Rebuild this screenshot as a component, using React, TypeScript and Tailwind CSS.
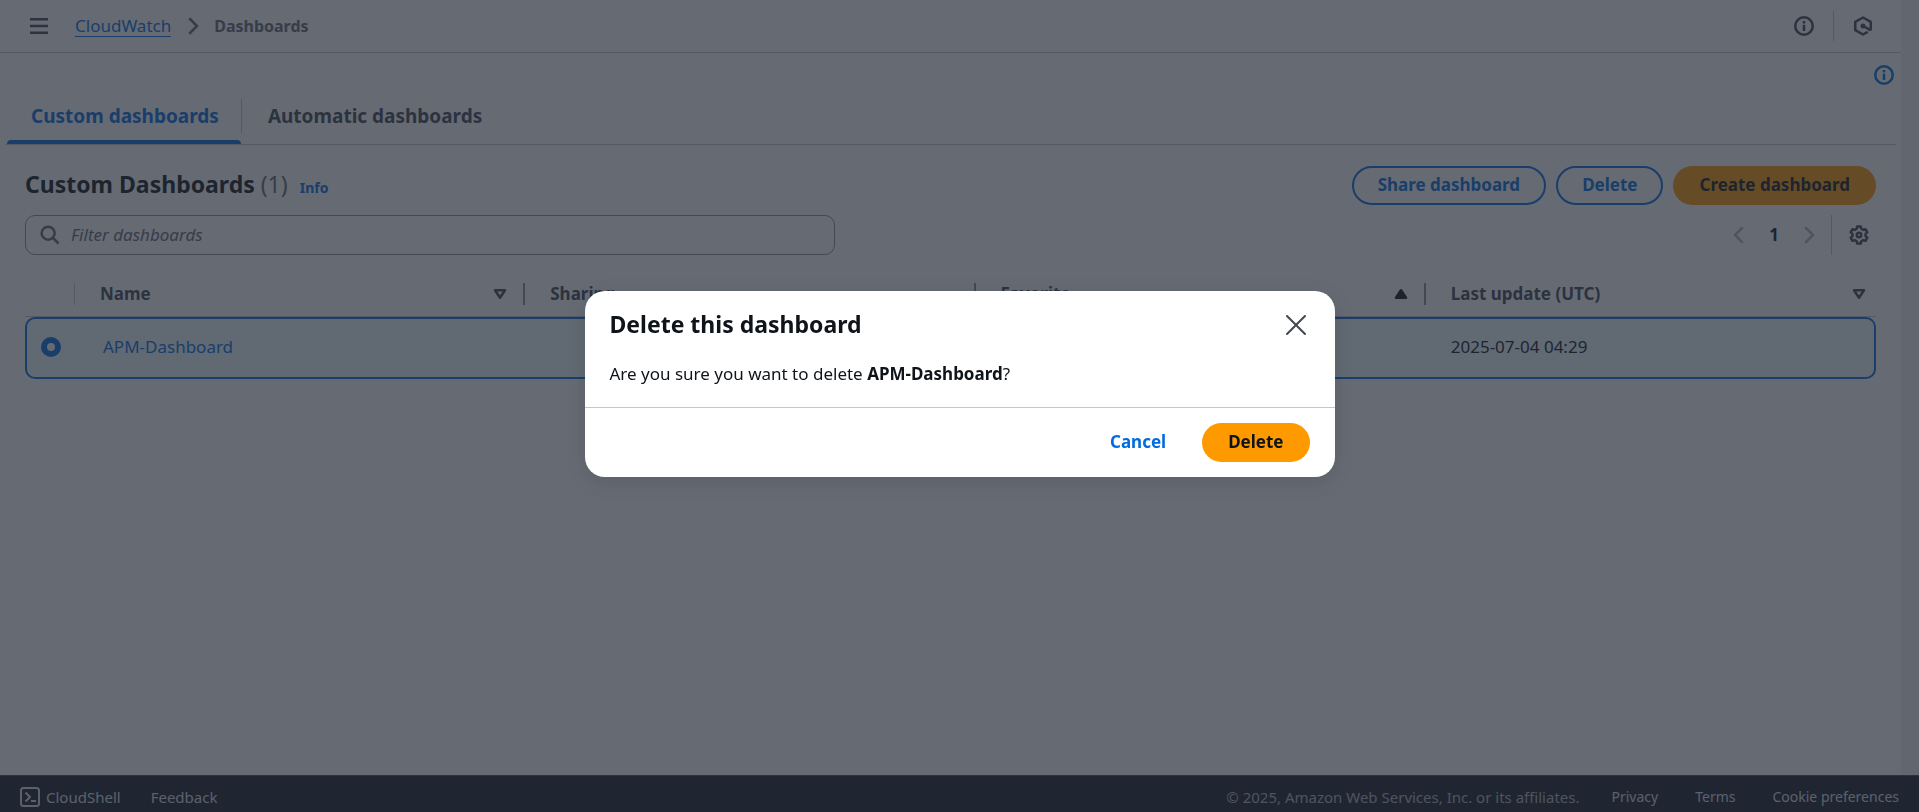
import React from "react";

type IconProps = { className?: string };

function InfoIcon({ className = "" }: IconProps) {
  return (
    <svg viewBox="0 0 16 16" className={`size-5 ${className}`} fill="none" stroke="currentColor" strokeWidth="2" aria-hidden="true">
      <circle cx="8" cy="8" r="7" />
      <path d="M8 12V7M8 6V4" />
    </svg>
  );
}

function MenuIcon() {
  return (
    <svg viewBox="0 0 16 16" className="size-5" fill="none" stroke="currentColor" strokeWidth="2" aria-hidden="true">
      <path d="M.8 2.600h14.400M.8 8h14.400M.8 13.400h14.400" />
    </svg>
  );
}

function AngleRight({ className = "" }: IconProps) {
  return (
    <svg viewBox="0 0 16 16" className={`size-5 ${className}`} fill="none" stroke="currentColor" strokeWidth="2" aria-hidden="true">
      <path d="m5 1.800 6.200 6.200L5 14.200" />
    </svg>
  );
}

function AngleLeft() {
  return (
    <svg viewBox="0 0 16 16" className="size-5" fill="none" stroke="currentColor" strokeWidth="2" aria-hidden="true">
      <path d="M11 1.800 4.800 8l6.200 6.200" />
    </svg>
  );
}

function HexagonIcon() {
  return (
    <svg viewBox="0 0 16 16" className="size-5" fill="none" stroke="currentColor" strokeWidth="2" aria-hidden="true">
      <path d="M14.200 11.600V4.700L8 1.200 1.800 4.700v6.600L8 14.800l3.800-2.100" strokeLinejoin="round" />
      <circle cx="8" cy="8" r="2" fill="currentColor" stroke="none" />
      <path d="m8 8 6 3.300" />
    </svg>
  );
}

function GearIcon() {
  return (
    <svg viewBox="0 0 16 16" className="size-5" fill="none" stroke="currentColor" strokeWidth="2" strokeLinejoin="round" aria-hidden="true">
      <path d="M6.540 1.150h2.920l.35 1.870 1.600.92 1.790-.62 1.460 2.520-1.440 1.240v1.840l1.440 1.240-1.460 2.520-1.790-.62-1.600.92-.35 1.870H6.540l-.35-1.870-1.600-.92-1.790.62-1.460-2.520 1.440-1.240V7.080L1.340 5.840 2.800 3.320l1.790.62 1.600-.92z" />
      <circle cx="8" cy="8" r="1.800" />
    </svg>
  );
}

function SearchIcon({ className = "" }: IconProps) {
  return (
    <svg viewBox="0 0 16 16" className={`size-5 ${className}`} fill="none" stroke="currentColor" strokeWidth="2" aria-hidden="true">
      <circle cx="6.500" cy="6.500" r="5.200" />
      <path d="m10.200 10.200 4.600 4.600" />
    </svg>
  );
}

function SortIcon({ up = false }: { up?: boolean }) {
  return (
    <svg viewBox="0 0 16 16" className="size-5" fill={up ? "currentColor" : "none"} stroke="currentColor" strokeWidth="2" strokeLinejoin="round" aria-hidden="true">
      <path d={up ? "M4 11h8L8 5z" : "M4 5h8l-4 6z"} />
    </svg>
  );
}

function CloseIcon() {
  return (
    <svg viewBox="0 0 24 24" className="size-6" fill="none" stroke="currentColor" strokeWidth="2" strokeLinecap="round" aria-hidden="true">
      <path d="m3 3 18 18M21 3 3 21" />
    </svg>
  );
}

function CloudShellIcon() {
  return (
    <svg viewBox="0 0 20 20" className="size-5" fill="none" stroke="currentColor" strokeWidth="2" strokeLinejoin="round" aria-hidden="true">
      <rect x="1" y="1" width="18" height="18" rx="2.500" />
      <path d="m5.500 5.500 4.500 4.500-4.500 4.500M11 14h5" />
    </svg>
  );
}

const outlineButton =
  "h-[39px] rounded-full border-2 border-[#006ce0] px-6 pb-[2px] font-bold text-[#006ce0]";

const columns = [
  { label: "Name", sort: "down" },
  { label: "Sharing", sort: "" },
  { label: "Favorite", sort: "up" },
  { label: "Last update (UTC)", sort: "down" },
];

function TopBar() {
  return (
    <header className="flex h-[53px] items-center border-b border-[#c6c6cd] pr-7 pl-[29px] text-[#424650]">
      <button type="button" aria-label="Open navigation">
        <MenuIcon />
      </button>
      <nav aria-label="Breadcrumbs" className="ml-[26px] flex items-center">
        <a href="#cloudwatch" className="border-b border-[#006ce0] pt-px leading-5 text-[#006ce0]">
          CloudWatch
        </a>
        <AngleRight className="mr-[11px] ml-3 text-[#656871]" />
        <span className="text-base leading-[22px] font-bold text-[#656871]">Dashboards</span>
      </nav>
      <div className="ml-auto flex items-center">
        <button type="button" aria-label="Help panel">
          <InfoIcon />
        </button>
        <span className="mx-[19px] h-[30px] w-px bg-[#c6c6cd]" />
        <button type="button" aria-label="Amazon Q">
          <HexagonIcon />
        </button>
      </div>
    </header>
  );
}

function Tabs() {
  return (
    <div role="tablist" className="mx-[5px] flex h-[52px] border-b border-[#c6c6cd] pl-[2px] text-[19px] font-bold">
      <button
        type="button"
        role="tab"
        aria-selected="true"
        className="flex flex-col justify-between text-[#006ce0]"
      >
        <span className="pt-[10px] pr-[22px] pl-6 leading-[26px]">Custom dashboards</span>
        <span className="h-1 w-full rounded-t bg-[#006ce0]" />
      </button>
      <span className="mt-[6px] h-[34px] w-px bg-[#c6c6cd]" />
      <button type="button" role="tab" aria-selected="false" className="flex px-[26px] pt-[10px] leading-[26px] text-[#424650]">
        Automatic dashboards
      </button>
    </div>
  );
}

function DashboardTable() {
  return (
    <table className="mt-[17px] w-full table-fixed border-separate border-spacing-0 text-left">
      <thead>
        <tr className="h-[45px] text-[#424650]">
          <th aria-label="Selection" className="w-[50px] border-b border-[#c6c6cd] p-0">
            <span className="ml-auto block h-[22px] w-px bg-[#c6c6cd]" />
          </th>
          {columns.map((column, index) => (
            <th key={column.label} className="border-b border-[#c6c6cd] p-0 pl-[25px] font-bold">
              <div className="flex items-center">
                {column.label}
                <span className="mr-[7px] ml-auto flex text-[#424650]">
                  {column.sort === "down" && <SortIcon />}
                  {column.sort === "up" && <span className="text-[#0f141a]"><SortIcon up /></span>}
                </span>
                <span className={index < 3 ? "ml-[6px] h-[22px] w-[2px] bg-[#8c8c94]" : ""} />
              </div>
            </th>
          ))}
        </tr>
      </thead>
      <tbody>
        <tr className="h-[62px]">
          <td className="rounded-l-[10px] border-y-2 border-l-2 border-[#006ce0] bg-[#f0fbff] p-0 pb-[2px] pl-[14px]">
            <input
              type="radio"
              name="dashboard"
              defaultChecked
              aria-label="Select APM-Dashboard"
              className="block size-5 appearance-none rounded-full border-[6px] border-[#006ce0] bg-white"
            />
          </td>
          <td className="border-y-2 border-[#006ce0] bg-[#f0fbff] p-0 pb-[2px] pl-7">
            <a href="#apm-dashboard" className="text-[#006ce0]">
              APM-Dashboard
            </a>
          </td>
          <td className="border-y-2 border-[#006ce0] bg-[#f0fbff]" />
          <td className="border-y-2 border-[#006ce0] bg-[#f0fbff]" />
          <td className="rounded-r-[10px] border-y-2 border-r-2 border-[#006ce0] bg-[#f0fbff] p-0 pb-[2px] pl-[25px]">
            2025-07-04 04:29
          </td>
        </tr>
      </tbody>
    </table>
  );
}

function DashboardsPanel() {
  return (
    <section className="px-[25px]">
      <div className="flex items-center pt-[21px]">
        <h1 className="pb-[4px] text-[23px] leading-[30px] font-bold">
          Custom Dashboards <span className="font-normal text-[#656871]">(1)</span>
        </h1>
        <a href="#info" className="mt-1 ml-3 text-sm font-bold text-[#006ce0]">
          Info
        </a>
        <div className="ml-auto flex gap-[10px]">
          <button type="button" className={outlineButton}>Share dashboard</button>
          <button type="button" className={outlineButton}>Delete</button>
          <button type="button" className="h-[39px] rounded-full bg-[#ff9900] px-[26px] pb-[2px] font-bold">
            Create dashboard
          </button>
        </div>
      </div>
      <div className="mt-[10px] flex items-center">
        <label className="flex h-10 w-[810px] items-center rounded-[10px] border border-[#8c8c94] px-[14px]">
          <SearchIcon className="text-[#656871]" />
          <input
            type="text"
            aria-label="Filter dashboards"
            placeholder="Filter dashboards"
            className="ml-[11px] h-7 flex-1 pb-[2px] outline-none placeholder:text-[#656871] placeholder:italic"
          />
        </label>
        <div className="ml-auto flex items-center text-[#b4b4bb]">
          <button type="button" aria-label="Previous page">
            <AngleLeft />
          </button>
          <button type="button" className="w-[50px] font-bold text-[#0f141a]">1</button>
          <button type="button" aria-label="Next page">
            <AngleRight />
          </button>
          <span className="ml-3 h-10 w-px bg-[#c6c6cd]" />
          <button type="button" aria-label="Preferences" className="mr-[7px] ml-[17px] text-[#424650]">
            <GearIcon />
          </button>
        </div>
      </div>
      <DashboardTable />
    </section>
  );
}

function Footer() {
  return (
    <footer className="flex h-[37px] shrink-0 items-center border-t border-[#424650] bg-[#161d26] px-5 pt-[5px] text-[15px] text-[#dedee3]">
      <button type="button" className="flex items-center gap-[6px]">
        <CloudShellIcon />
        CloudShell
      </button>
      <a href="#feedback" className="ml-[30px]">Feedback</a>
      <span className="ml-auto text-[#b4b4bb]">© 2025, Amazon Web Services, Inc. or its affiliates.</span>
      <div className="ml-8 flex gap-[37px] text-sm">
        <a href="#privacy">Privacy</a>
        <a href="#terms">Terms</a>
        <button type="button">Cookie preferences</button>
      </div>
    </footer>
  );
}

function DeleteDialog() {
  return (
    <div className="fixed inset-0 flex items-center justify-center bg-[rgba(35,43,55,0.7)] pb-11">
      <div
        role="dialog"
        aria-modal="true"
        aria-labelledby="dialog-title"
        className="w-full max-w-[750px] rounded-[20px] bg-white shadow-[0_5px_20px_1px_rgba(0,7,22,0.1)]"
      >
        <div className="flex items-center justify-between px-[25px] pt-[18px]">
          <h2 id="dialog-title" className="pb-px text-[23px] leading-[31px] font-bold">Delete this dashboard</h2>
          <button type="button" aria-label="Close" className="mr-[2px] text-[#424650]">
            <CloseIcon />
          </button>
        </div>
        <p className="px-[25px] pt-5 pb-[21px] leading-[25px]">
          Are you sure you want to delete <strong>APM-Dashboard</strong>?
        </p>
        <div className="flex justify-end gap-[10px] border-t border-[#c6c6cd] px-[25px] py-[15px]">
          <button type="button" className="h-[39px] rounded-full px-[26px] pb-[2px] font-bold text-[#006ce0]">Cancel</button>
          <button type="button" className="h-[39px] rounded-full bg-[#ff9900] px-[26px] pb-[2px] font-bold">Delete</button>
        </div>
      </div>
    </div>
  );
}

export default function App() {
  return (
    <div className="flex h-screen flex-col bg-white font-['Noto_Sans',sans-serif] text-[17px] leading-[22px] text-[#0f141a]">
      <div className="flex min-h-0 flex-1">
        <main className="min-w-0 flex-1">
          <TopBar />
          <div className="flex h-10 justify-end pt-3 pr-[7px]">
            <button type="button" aria-label="Info" className="h-5 text-[#006ce0]">
              <InfoIcon />
            </button>
          </div>
          <Tabs />
          <DashboardsPanel />
        </main>
        <div className="w-[18px] bg-[#f0f0f0]" />
      </div>
      <Footer />
      <DeleteDialog />
    </div>
  );
}
